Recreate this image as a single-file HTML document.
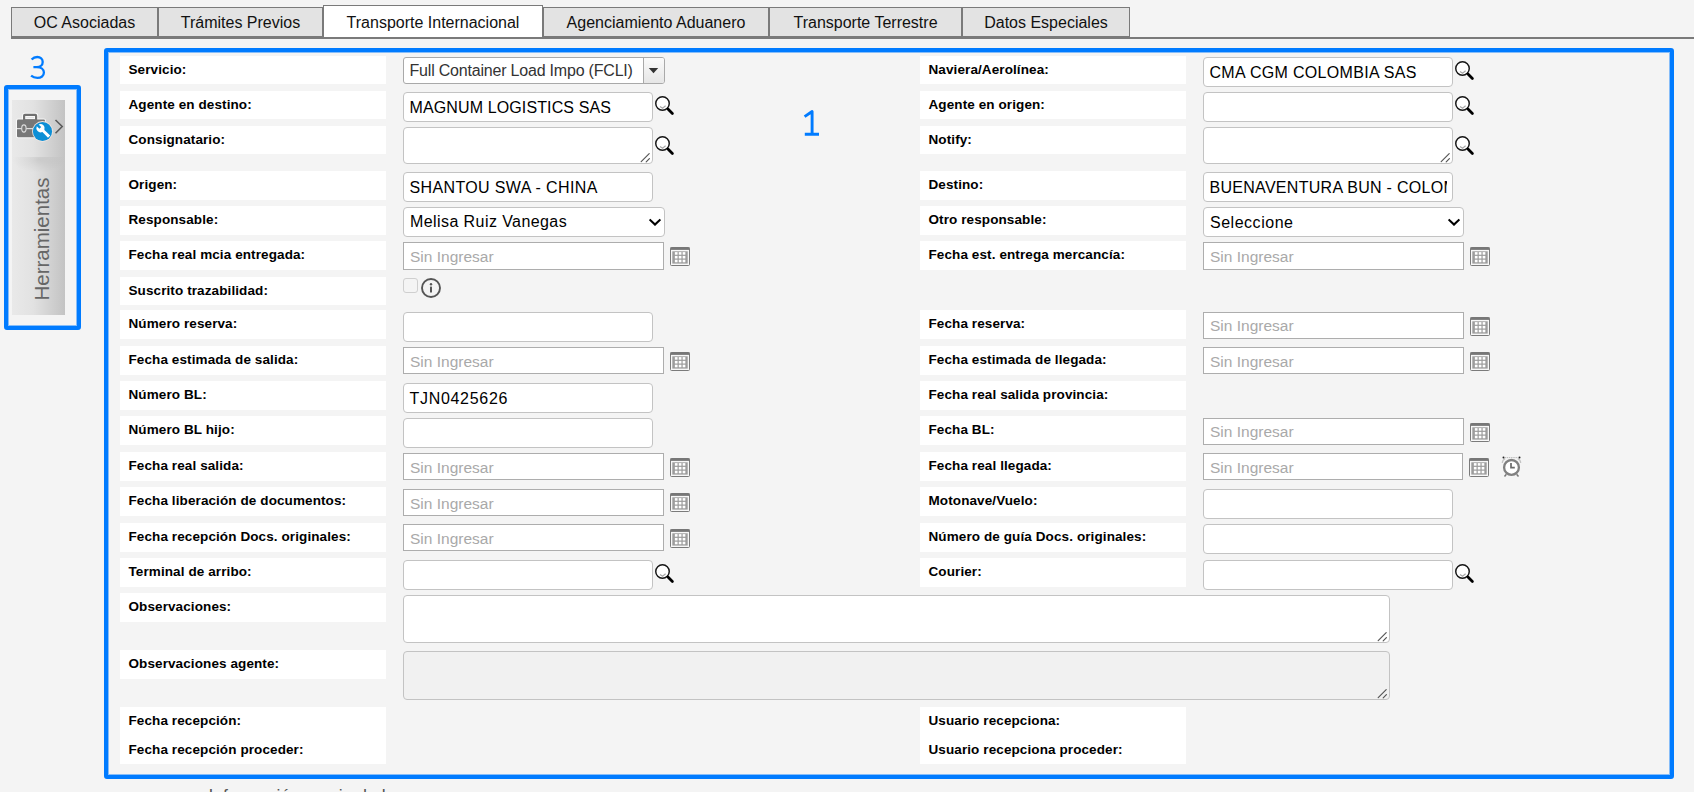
<!DOCTYPE html>
<html><head><meta charset="utf-8"><title>Transporte Internacional</title>
<style>
html,body{margin:0;padding:0}
body{width:1694px;height:792px;overflow:hidden;position:relative;background:#f4f4f4;font-family:'Liberation Sans', sans-serif}
.b{position:absolute}
.t{position:absolute;white-space:nowrap;line-height:20px;font-family:'Liberation Sans', sans-serif}
.tab{position:absolute;box-sizing:content-box;border:1px solid #7a7a7a;background:#e3e3e3;font-size:16px;color:#111;text-align:center;line-height:30px;font-family:'Liberation Sans', sans-serif}
.tab.act{background:#fff;border-bottom:none;line-height:34px}
.inp{box-sizing:border-box;border:1px solid #c3c3c3;border-radius:4px;background:#fff}
.dinp{position:absolute;box-sizing:border-box;border:1px solid #adadad;background:#fff}
</style></head><body>
<div class="b" style="left:11px;top:37px;width:1683px;height:2px;background:#7a7a7a"></div>
<div class="tab" style="left:11px;top:7px;width:145px;height:28px;">OC Asociadas</div>
<div class="tab" style="left:158px;top:7px;width:163px;height:28px;">Trámites Previos</div>
<div class="tab act" style="left:323px;top:5px;width:218px;height:31px;">Transporte Internacional</div>
<div class="tab" style="left:543px;top:7px;width:224px;height:28px;">Agenciamiento Aduanero</div>
<div class="tab" style="left:769px;top:7px;width:191px;height:28px;">Transporte Terrestre</div>
<div class="tab" style="left:962px;top:7px;width:166px;height:28px;">Datos Especiales</div>
<div class="b" style="left:4px;top:85px;width:77px;height:245px;border:4px solid #007bff;border-radius:3px;box-sizing:border-box;box-shadow:inset 0 0 0 1px rgba(0,123,255,0.45)"></div>
<div class="b" style="left:12px;top:100px;width:53px;height:215px;background:linear-gradient(to right,#e9e9e9 0%,#e2e2e2 40%,#c3c3c3 100%)"></div>
<div class="b" style="left:12px;top:150px;width:53px;height:24px;background:radial-gradient(ellipse 50% 55% at 50% 40%,rgba(0,0,0,0.08) 0%,rgba(0,0,0,0.04) 45%,rgba(0,0,0,0) 100%);clip-path:inset(7px 0 0 0)"></div>
<svg class="b" style="left:12px;top:105px" width="56" height="40" viewBox="0 0 56 40">
<rect x="12.1" y="9.9" width="12" height="5.5" rx="0.8" fill="none" stroke="rgba(255,255,255,0.75)" stroke-width="4.2"/><rect x="5" y="14.6" width="28" height="17.7" rx="1.2" fill="none" stroke="rgba(255,255,255,0.75)" stroke-width="2"/><rect x="12.1" y="9.9" width="12" height="5.5" rx="0.8" fill="none" stroke="#707070" stroke-width="2.2"/>
<rect x="5" y="14.6" width="28" height="17.7" rx="1.2" fill="#777"/>
<rect x="5" y="23" width="28" height="1.2" fill="#ddd"/>
<ellipse cx="11.9" cy="23.5" rx="2.2" ry="3.6" fill="#777" stroke="#ddd" stroke-width="1.1"/>
<circle cx="30.5" cy="26.5" r="10.4" fill="#f2e6e0"/>
<circle cx="30.5" cy="26.5" r="9.6" fill="#0d8fd6"/>
<path d="M24.8 21.2 a4.3 4.3 0 0 0 5.6 5.8 l5.6 5.8 l2.2 -2.2 l-5.8 -5.6 a4.3 4.3 0 0 0 -5.8 -5.6 l2.6 2.6 l-1.8 1.8 z" fill="#fff"/>
<path d="M43.5 15 L50.2 21.5 L43.5 28.3" fill="none" stroke="#5a5a5a" stroke-width="1.6"/>
</svg>
<div class="t" style="left:42px;top:239px;font-size:20.5px;color:#666;transform:translate(-50%,-50%) rotate(-90deg);line-height:20px">Herramientas</div>
<svg class="b" style="left:26px;top:52px" width="24" height="30" viewBox="26 52 24 30"><path d="M31.6 59.6 C33.4 57.6 35.4 57 37.2 57 C40.5 57 42.7 59 42.7 61.9 C42.7 65 40.3 67.1 36.8 67.1 L33.4 67.1 M36.8 67.1 C41 67.1 43.9 69.4 43.9 72.6 C43.9 75.9 41.1 77.9 37.4 77.9 C35 77.9 32.8 77.2 31.1 75.7" fill="none" stroke="#007bff" stroke-width="2.3" stroke-linecap="butt"/></svg>
<svg class="b" style="left:800px;top:106px" width="24" height="34" viewBox="800 106 24 34"><path d="M804.6 116.6 L812.1 111.5 V134 M804.8 134.3 H819" fill="none" stroke="#007bff" stroke-width="2.9" stroke-linecap="butt" stroke-linejoin="round"/></svg>
<div class="b" style="left:104px;top:48px;width:1570px;height:731px;border:4px solid #007bff;border-radius:3px;box-sizing:border-box;box-shadow:inset 0 0 0 1px rgba(0,123,255,0.45)"></div>
<div class="b" style="left:120px;top:56px;width:266px;height:28px;background:#fff"></div>
<div class="b" style="left:920px;top:56px;width:266px;height:28px;background:#fff"></div>
<div class="t" style="left:128.5px;top:60.00px;font-size:13.5px;font-weight:700;color:#000;letter-spacing:0.1px;">Servicio:</div>
<div class="t" style="left:928.5px;top:60.00px;font-size:13.5px;font-weight:700;color:#000;letter-spacing:0.1px;">Naviera/Aerolínea:</div>
<div class="b" style="left:120px;top:91px;width:266px;height:28px;background:#fff"></div>
<div class="b" style="left:920px;top:91px;width:266px;height:28px;background:#fff"></div>
<div class="t" style="left:128.5px;top:95.00px;font-size:13.5px;font-weight:700;color:#000;letter-spacing:0.1px;">Agente en destino:</div>
<div class="t" style="left:928.5px;top:95.00px;font-size:13.5px;font-weight:700;color:#000;letter-spacing:0.1px;">Agente en origen:</div>
<div class="b" style="left:120px;top:126px;width:266px;height:28px;background:#fff"></div>
<div class="b" style="left:920px;top:126px;width:266px;height:28px;background:#fff"></div>
<div class="t" style="left:128.5px;top:130.00px;font-size:13.5px;font-weight:700;color:#000;letter-spacing:0.1px;">Consignatario:</div>
<div class="t" style="left:928.5px;top:130.00px;font-size:13.5px;font-weight:700;color:#000;letter-spacing:0.1px;">Notify:</div>
<div class="b" style="left:120px;top:171px;width:266px;height:29px;background:#fff"></div>
<div class="b" style="left:920px;top:171px;width:266px;height:29px;background:#fff"></div>
<div class="t" style="left:128.5px;top:175.00px;font-size:13.5px;font-weight:700;color:#000;letter-spacing:0.1px;">Origen:</div>
<div class="t" style="left:928.5px;top:175.00px;font-size:13.5px;font-weight:700;color:#000;letter-spacing:0.1px;">Destino:</div>
<div class="b" style="left:120px;top:206px;width:266px;height:29px;background:#fff"></div>
<div class="b" style="left:920px;top:206px;width:266px;height:29px;background:#fff"></div>
<div class="t" style="left:128.5px;top:210.00px;font-size:13.5px;font-weight:700;color:#000;letter-spacing:0.1px;">Responsable:</div>
<div class="t" style="left:928.5px;top:210.00px;font-size:13.5px;font-weight:700;color:#000;letter-spacing:0.1px;">Otro responsable:</div>
<div class="b" style="left:120px;top:241px;width:266px;height:29px;background:#fff"></div>
<div class="b" style="left:920px;top:241px;width:266px;height:29px;background:#fff"></div>
<div class="t" style="left:128.5px;top:245.00px;font-size:13.5px;font-weight:700;color:#000;letter-spacing:0.1px;">Fecha real mcia entregada:</div>
<div class="t" style="left:928.5px;top:245.00px;font-size:13.5px;font-weight:700;color:#000;letter-spacing:0.1px;">Fecha est. entrega mercancía:</div>
<div class="b" style="left:120px;top:277px;width:266px;height:28px;background:#fff"></div>
<div class="t" style="left:128.5px;top:281.00px;font-size:13.5px;font-weight:700;color:#000;letter-spacing:0.1px;">Suscrito trazabilidad:</div>
<div class="b" style="left:120px;top:310px;width:266px;height:29px;background:#fff"></div>
<div class="b" style="left:920px;top:310px;width:266px;height:29px;background:#fff"></div>
<div class="t" style="left:128.5px;top:314.00px;font-size:13.5px;font-weight:700;color:#000;letter-spacing:0.1px;">Número reserva:</div>
<div class="t" style="left:928.5px;top:314.00px;font-size:13.5px;font-weight:700;color:#000;letter-spacing:0.1px;">Fecha reserva:</div>
<div class="b" style="left:120px;top:346px;width:266px;height:29px;background:#fff"></div>
<div class="b" style="left:920px;top:346px;width:266px;height:29px;background:#fff"></div>
<div class="t" style="left:128.5px;top:350.00px;font-size:13.5px;font-weight:700;color:#000;letter-spacing:0.1px;">Fecha estimada de salida:</div>
<div class="t" style="left:928.5px;top:350.00px;font-size:13.5px;font-weight:700;color:#000;letter-spacing:0.1px;">Fecha estimada de llegada:</div>
<div class="b" style="left:120px;top:381px;width:266px;height:29px;background:#fff"></div>
<div class="b" style="left:920px;top:381px;width:266px;height:29px;background:#fff"></div>
<div class="t" style="left:128.5px;top:385.00px;font-size:13.5px;font-weight:700;color:#000;letter-spacing:0.1px;">Número BL:</div>
<div class="t" style="left:928.5px;top:385.00px;font-size:13.5px;font-weight:700;color:#000;letter-spacing:0.1px;">Fecha real salida provincia:</div>
<div class="b" style="left:120px;top:416px;width:266px;height:29px;background:#fff"></div>
<div class="b" style="left:920px;top:416px;width:266px;height:29px;background:#fff"></div>
<div class="t" style="left:128.5px;top:420.00px;font-size:13.5px;font-weight:700;color:#000;letter-spacing:0.1px;">Número BL hijo:</div>
<div class="t" style="left:928.5px;top:420.00px;font-size:13.5px;font-weight:700;color:#000;letter-spacing:0.1px;">Fecha BL:</div>
<div class="b" style="left:120px;top:452px;width:266px;height:29px;background:#fff"></div>
<div class="b" style="left:920px;top:452px;width:266px;height:29px;background:#fff"></div>
<div class="t" style="left:128.5px;top:456.00px;font-size:13.5px;font-weight:700;color:#000;letter-spacing:0.1px;">Fecha real salida:</div>
<div class="t" style="left:928.5px;top:456.00px;font-size:13.5px;font-weight:700;color:#000;letter-spacing:0.1px;">Fecha real llegada:</div>
<div class="b" style="left:120px;top:487px;width:266px;height:29px;background:#fff"></div>
<div class="b" style="left:920px;top:487px;width:266px;height:29px;background:#fff"></div>
<div class="t" style="left:128.5px;top:491.00px;font-size:13.5px;font-weight:700;color:#000;letter-spacing:0.1px;">Fecha liberación de documentos:</div>
<div class="t" style="left:928.5px;top:491.00px;font-size:13.5px;font-weight:700;color:#000;letter-spacing:0.1px;">Motonave/Vuelo:</div>
<div class="b" style="left:120px;top:523px;width:266px;height:29px;background:#fff"></div>
<div class="b" style="left:920px;top:523px;width:266px;height:29px;background:#fff"></div>
<div class="t" style="left:128.5px;top:527.00px;font-size:13.5px;font-weight:700;color:#000;letter-spacing:0.1px;">Fecha recepción Docs. originales:</div>
<div class="t" style="left:928.5px;top:527.00px;font-size:13.5px;font-weight:700;color:#000;letter-spacing:0.1px;">Número de guía Docs. originales:</div>
<div class="b" style="left:120px;top:558px;width:266px;height:29px;background:#fff"></div>
<div class="b" style="left:920px;top:558px;width:266px;height:29px;background:#fff"></div>
<div class="t" style="left:128.5px;top:562.00px;font-size:13.5px;font-weight:700;color:#000;letter-spacing:0.1px;">Terminal de arribo:</div>
<div class="t" style="left:928.5px;top:562.00px;font-size:13.5px;font-weight:700;color:#000;letter-spacing:0.1px;">Courier:</div>
<div class="b" style="left:120px;top:593px;width:266px;height:29px;background:#fff"></div>
<div class="t" style="left:128.5px;top:597.00px;font-size:13.5px;font-weight:700;color:#000;letter-spacing:0.1px;">Observaciones:</div>
<div class="b" style="left:120px;top:650px;width:266px;height:29px;background:#fff"></div>
<div class="t" style="left:128.5px;top:654.00px;font-size:13.5px;font-weight:700;color:#000;letter-spacing:0.1px;">Observaciones agente:</div>
<div class="b" style="left:120px;top:707px;width:266px;height:57px;background:#fff"></div>
<div class="b" style="left:920px;top:707px;width:266px;height:57px;background:#fff"></div>
<div class="t" style="left:128.5px;top:711.00px;font-size:13.5px;font-weight:700;color:#000;letter-spacing:0.1px;">Fecha recepción:</div>
<div class="t" style="left:128.5px;top:740.00px;font-size:13.5px;font-weight:700;color:#000;letter-spacing:0.1px;">Fecha recepción proceder:</div>
<div class="t" style="left:928.5px;top:711.00px;font-size:13.5px;font-weight:700;color:#000;letter-spacing:0.1px;">Usuario recepciona:</div>
<div class="t" style="left:928.5px;top:740.00px;font-size:13.5px;font-weight:700;color:#000;letter-spacing:0.1px;">Usuario recepciona proceder:</div>
<div class="b" style="left:403px;top:57px;width:262px;height:27px;border:1px solid #a9a9a9;border-radius:3px;box-sizing:border-box;background:#fff;overflow:hidden"><div style="position:absolute;right:0;top:0;width:20px;height:25px;border-left:1px solid #a9a9a9;background:linear-gradient(#fafafa,#e6e6e6)"></div></div>
<svg class="b" style="left:648px;top:67px" width="12" height="8" viewBox="0 0 12 8"><path d="M0.8 1 L10.2 1 L5.5 6.2 z" fill="#333"/></svg>
<div class="t" style="left:409.5px;top:61.20px;font-size:16px;font-weight:400;color:#333;letter-spacing:-0.2px;">Full Container Load Impo (FCLI)</div>
<div class="b inp" style="left:403px;top:92px;width:250px;height:30px;background:#fff"></div>
<div class="b" style="left:404px;top:93px;width:242.5px;height:28px;overflow:hidden">
<div class="t" style="left:5.5px;top:5.00px;font-size:16px;font-weight:400;color:#000;letter-spacing:0.12px;">MAGNUM LOGISTICS SAS</div>
</div>
<svg class="b" style="left:654px;top:95px" width="22" height="22" viewBox="0 0 22 22"><circle cx="8.5" cy="8.5" r="6.75" fill="#fff" stroke="#151515" stroke-width="1.45"/><path d="M6 11.4 L8.6 13.2 L11.6 10.8" fill="none" stroke="#a8a8a8" stroke-width="1.2"/><path d="M14 14 L18.4 18.4" stroke="#000" stroke-width="2.8" stroke-linecap="round"/></svg>
<div class="b inp" style="left:403px;top:127px;width:250px;height:37px;background:#fff"></div>
<svg class="b" style="left:639px;top:150px" width="14" height="14" viewBox="0 0 14 14"><path d="M2.2 11.6 L10.2 3.6 M7.2 11.8 L10.4 8.6" stroke="#555" stroke-width="1.2" stroke-linecap="round"/></svg>
<svg class="b" style="left:654px;top:135px" width="22" height="22" viewBox="0 0 22 22"><circle cx="8.5" cy="8.5" r="6.75" fill="#fff" stroke="#151515" stroke-width="1.45"/><path d="M6 11.4 L8.6 13.2 L11.6 10.8" fill="none" stroke="#a8a8a8" stroke-width="1.2"/><path d="M14 14 L18.4 18.4" stroke="#000" stroke-width="2.8" stroke-linecap="round"/></svg>
<div class="b inp" style="left:403px;top:172px;width:250px;height:30px;background:#fff"></div>
<div class="b" style="left:404px;top:173px;width:242.5px;height:28px;overflow:hidden">
<div class="t" style="left:5.5px;top:5.00px;font-size:16px;font-weight:400;color:#000;letter-spacing:0.36px;">SHANTOU SWA - CHINA</div>
</div>
<div class="b inp" style="left:403px;top:207px;width:262px;height:30px"></div>
<div class="t" style="left:410px;top:212.30px;font-size:16px;font-weight:400;color:#000;letter-spacing:0.42px;">Melisa Ruiz Vanegas</div>
<svg class="b" style="left:648.5px;top:218.3px" width="12" height="8" viewBox="0 0 12 8"><path d="M0.6 1.4 L6 6.6 L11.4 1.4" fill="none" stroke="#000" stroke-width="2.1"/></svg>
<div class="b dinp" style="left:403px;top:242px;width:261px;height:28px"></div>
<div class="t" style="left:410px;top:246.50px;font-size:15.5px;font-weight:400;color:#a9a9a9;letter-spacing:0px;">Sin Ingresar</div>
<svg class="b" style="left:670px;top:247px" width="21" height="19" viewBox="0 0 21 19"><rect x="0.5" y="0.5" width="19" height="18" rx="1" fill="#f8f8f8" stroke="#7b7b7b" stroke-width="1"/><rect x="0.5" y="0.3" width="19" height="2.6" fill="#777"/><rect x="2.3" y="4.3" width="15.4" height="12.3" fill="#9c9c9c"/><g fill="#fff"><rect x="4.85" y="5.10" width="2.7" height="2.6"/><rect x="8.75" y="5.10" width="2.7" height="2.6"/><rect x="12.65" y="5.10" width="2.7" height="2.6"/><rect x="4.85" y="8.90" width="2.7" height="2.6"/><rect x="8.75" y="8.90" width="2.7" height="2.6"/><rect x="12.65" y="8.90" width="2.7" height="2.6"/><rect x="4.85" y="12.70" width="2.7" height="2.6"/><rect x="8.75" y="12.70" width="2.7" height="2.6"/><rect x="12.65" y="12.70" width="2.7" height="2.6"/></g></svg>
<div class="b" style="left:403px;top:278px;width:15px;height:15px;border:1px solid #cfcfcf;border-radius:3px;box-sizing:border-box"></div>
<svg class="b" style="left:420px;top:277px" width="22" height="22" viewBox="0 0 22 22"><circle cx="11" cy="11" r="9" fill="none" stroke="#555" stroke-width="1.9"/><circle cx="11" cy="7.2" r="1.2" fill="#555"/><rect x="10" y="9.6" width="2" height="6" rx="0.6" fill="#555"/></svg>
<div class="b inp" style="left:403px;top:312px;width:250px;height:30px;background:#fff"></div>
<div class="b dinp" style="left:403px;top:347px;width:261px;height:27px"></div>
<div class="t" style="left:410px;top:351.50px;font-size:15.5px;font-weight:400;color:#a9a9a9;letter-spacing:0px;">Sin Ingresar</div>
<svg class="b" style="left:670px;top:352px" width="21" height="19" viewBox="0 0 21 19"><rect x="0.5" y="0.5" width="19" height="18" rx="1" fill="#f8f8f8" stroke="#7b7b7b" stroke-width="1"/><rect x="0.5" y="0.3" width="19" height="2.6" fill="#777"/><rect x="2.3" y="4.3" width="15.4" height="12.3" fill="#9c9c9c"/><g fill="#fff"><rect x="4.85" y="5.10" width="2.7" height="2.6"/><rect x="8.75" y="5.10" width="2.7" height="2.6"/><rect x="12.65" y="5.10" width="2.7" height="2.6"/><rect x="4.85" y="8.90" width="2.7" height="2.6"/><rect x="8.75" y="8.90" width="2.7" height="2.6"/><rect x="12.65" y="8.90" width="2.7" height="2.6"/><rect x="4.85" y="12.70" width="2.7" height="2.6"/><rect x="8.75" y="12.70" width="2.7" height="2.6"/><rect x="12.65" y="12.70" width="2.7" height="2.6"/></g></svg>
<div class="b inp" style="left:403px;top:383px;width:250px;height:30px;background:#fff"></div>
<div class="b" style="left:404px;top:384px;width:242.5px;height:28px;overflow:hidden">
<div class="t" style="left:5.5px;top:4.60px;font-size:16px;font-weight:400;color:#000;letter-spacing:0.7px;">TJN0425626</div>
</div>
<div class="b inp" style="left:403px;top:418px;width:250px;height:30px;background:#fff"></div>
<div class="b dinp" style="left:403px;top:453px;width:261px;height:27px"></div>
<div class="t" style="left:410px;top:457.50px;font-size:15.5px;font-weight:400;color:#a9a9a9;letter-spacing:0px;">Sin Ingresar</div>
<svg class="b" style="left:670px;top:458px" width="21" height="19" viewBox="0 0 21 19"><rect x="0.5" y="0.5" width="19" height="18" rx="1" fill="#f8f8f8" stroke="#7b7b7b" stroke-width="1"/><rect x="0.5" y="0.3" width="19" height="2.6" fill="#777"/><rect x="2.3" y="4.3" width="15.4" height="12.3" fill="#9c9c9c"/><g fill="#fff"><rect x="4.85" y="5.10" width="2.7" height="2.6"/><rect x="8.75" y="5.10" width="2.7" height="2.6"/><rect x="12.65" y="5.10" width="2.7" height="2.6"/><rect x="4.85" y="8.90" width="2.7" height="2.6"/><rect x="8.75" y="8.90" width="2.7" height="2.6"/><rect x="12.65" y="8.90" width="2.7" height="2.6"/><rect x="4.85" y="12.70" width="2.7" height="2.6"/><rect x="8.75" y="12.70" width="2.7" height="2.6"/><rect x="12.65" y="12.70" width="2.7" height="2.6"/></g></svg>
<div class="b dinp" style="left:403px;top:489px;width:261px;height:27px"></div>
<div class="t" style="left:410px;top:493.50px;font-size:15.5px;font-weight:400;color:#a9a9a9;letter-spacing:0px;">Sin Ingresar</div>
<svg class="b" style="left:670px;top:493px" width="21" height="19" viewBox="0 0 21 19"><rect x="0.5" y="0.5" width="19" height="18" rx="1" fill="#f8f8f8" stroke="#7b7b7b" stroke-width="1"/><rect x="0.5" y="0.3" width="19" height="2.6" fill="#777"/><rect x="2.3" y="4.3" width="15.4" height="12.3" fill="#9c9c9c"/><g fill="#fff"><rect x="4.85" y="5.10" width="2.7" height="2.6"/><rect x="8.75" y="5.10" width="2.7" height="2.6"/><rect x="12.65" y="5.10" width="2.7" height="2.6"/><rect x="4.85" y="8.90" width="2.7" height="2.6"/><rect x="8.75" y="8.90" width="2.7" height="2.6"/><rect x="12.65" y="8.90" width="2.7" height="2.6"/><rect x="4.85" y="12.70" width="2.7" height="2.6"/><rect x="8.75" y="12.70" width="2.7" height="2.6"/><rect x="12.65" y="12.70" width="2.7" height="2.6"/></g></svg>
<div class="b dinp" style="left:403px;top:524px;width:261px;height:27px"></div>
<div class="t" style="left:410px;top:528.50px;font-size:15.5px;font-weight:400;color:#a9a9a9;letter-spacing:0px;">Sin Ingresar</div>
<svg class="b" style="left:670px;top:529px" width="21" height="19" viewBox="0 0 21 19"><rect x="0.5" y="0.5" width="19" height="18" rx="1" fill="#f8f8f8" stroke="#7b7b7b" stroke-width="1"/><rect x="0.5" y="0.3" width="19" height="2.6" fill="#777"/><rect x="2.3" y="4.3" width="15.4" height="12.3" fill="#9c9c9c"/><g fill="#fff"><rect x="4.85" y="5.10" width="2.7" height="2.6"/><rect x="8.75" y="5.10" width="2.7" height="2.6"/><rect x="12.65" y="5.10" width="2.7" height="2.6"/><rect x="4.85" y="8.90" width="2.7" height="2.6"/><rect x="8.75" y="8.90" width="2.7" height="2.6"/><rect x="12.65" y="8.90" width="2.7" height="2.6"/><rect x="4.85" y="12.70" width="2.7" height="2.6"/><rect x="8.75" y="12.70" width="2.7" height="2.6"/><rect x="12.65" y="12.70" width="2.7" height="2.6"/></g></svg>
<div class="b inp" style="left:403px;top:560px;width:250px;height:30px;background:#fff"></div>
<svg class="b" style="left:654px;top:563px" width="22" height="22" viewBox="0 0 22 22"><circle cx="8.5" cy="8.5" r="6.75" fill="#fff" stroke="#151515" stroke-width="1.45"/><path d="M6 11.4 L8.6 13.2 L11.6 10.8" fill="none" stroke="#a8a8a8" stroke-width="1.2"/><path d="M14 14 L18.4 18.4" stroke="#000" stroke-width="2.8" stroke-linecap="round"/></svg>
<div class="b inp" style="left:403px;top:595px;width:987px;height:48px;background:#fff"></div>
<svg class="b" style="left:1376px;top:629px" width="14" height="14" viewBox="0 0 14 14"><path d="M2.2 11.6 L10.2 3.6 M7.2 11.8 L10.4 8.6" stroke="#555" stroke-width="1.2" stroke-linecap="round"/></svg>
<div class="b inp" style="left:403px;top:651px;width:987px;height:49px;background:#f1f1f1"></div>
<svg class="b" style="left:1376px;top:686px" width="14" height="14" viewBox="0 0 14 14"><path d="M2.2 11.6 L10.2 3.6 M7.2 11.8 L10.4 8.6" stroke="#555" stroke-width="1.2" stroke-linecap="round"/></svg>
<div class="b inp" style="left:1203px;top:57px;width:250px;height:30px;background:#fff"></div>
<div class="b" style="left:1204px;top:58px;width:242.5px;height:28px;overflow:hidden">
<div class="t" style="left:5.5px;top:4.70px;font-size:16px;font-weight:400;color:#000;letter-spacing:0.32px;">CMA CGM COLOMBIA SAS</div>
</div>
<svg class="b" style="left:1454px;top:60px" width="22" height="22" viewBox="0 0 22 22"><circle cx="8.5" cy="8.5" r="6.75" fill="#fff" stroke="#151515" stroke-width="1.45"/><path d="M6 11.4 L8.6 13.2 L11.6 10.8" fill="none" stroke="#a8a8a8" stroke-width="1.2"/><path d="M14 14 L18.4 18.4" stroke="#000" stroke-width="2.8" stroke-linecap="round"/></svg>
<div class="b inp" style="left:1203px;top:92px;width:250px;height:30px;background:#fff"></div>
<svg class="b" style="left:1454px;top:95px" width="22" height="22" viewBox="0 0 22 22"><circle cx="8.5" cy="8.5" r="6.75" fill="#fff" stroke="#151515" stroke-width="1.45"/><path d="M6 11.4 L8.6 13.2 L11.6 10.8" fill="none" stroke="#a8a8a8" stroke-width="1.2"/><path d="M14 14 L18.4 18.4" stroke="#000" stroke-width="2.8" stroke-linecap="round"/></svg>
<div class="b inp" style="left:1203px;top:127px;width:250px;height:37px;background:#fff"></div>
<svg class="b" style="left:1439px;top:150px" width="14" height="14" viewBox="0 0 14 14"><path d="M2.2 11.6 L10.2 3.6 M7.2 11.8 L10.4 8.6" stroke="#555" stroke-width="1.2" stroke-linecap="round"/></svg>
<svg class="b" style="left:1454px;top:135px" width="22" height="22" viewBox="0 0 22 22"><circle cx="8.5" cy="8.5" r="6.75" fill="#fff" stroke="#151515" stroke-width="1.45"/><path d="M6 11.4 L8.6 13.2 L11.6 10.8" fill="none" stroke="#a8a8a8" stroke-width="1.2"/><path d="M14 14 L18.4 18.4" stroke="#000" stroke-width="2.8" stroke-linecap="round"/></svg>
<div class="b inp" style="left:1203px;top:172px;width:250px;height:30px;background:#fff"></div>
<div class="b" style="left:1204px;top:173px;width:242.5px;height:28px;overflow:hidden">
<div class="t" style="left:5.5px;top:5.00px;font-size:16px;font-weight:400;color:#000;letter-spacing:0.29px;">BUENAVENTURA BUN - COLOMBIA</div>
</div>
<div class="b inp" style="left:1203px;top:207px;width:261px;height:30px"></div>
<div class="t" style="left:1210px;top:212.80px;font-size:16px;font-weight:400;color:#000;letter-spacing:0.52px;">Seleccione</div>
<svg class="b" style="left:1447.5px;top:218.3px" width="12" height="8" viewBox="0 0 12 8"><path d="M0.6 1.4 L6 6.6 L11.4 1.4" fill="none" stroke="#000" stroke-width="2.1"/></svg>
<div class="b dinp" style="left:1203px;top:242px;width:261px;height:28px"></div>
<div class="t" style="left:1210px;top:246.50px;font-size:15.5px;font-weight:400;color:#a9a9a9;letter-spacing:0px;">Sin Ingresar</div>
<svg class="b" style="left:1470px;top:247px" width="21" height="19" viewBox="0 0 21 19"><rect x="0.5" y="0.5" width="19" height="18" rx="1" fill="#f8f8f8" stroke="#7b7b7b" stroke-width="1"/><rect x="0.5" y="0.3" width="19" height="2.6" fill="#777"/><rect x="2.3" y="4.3" width="15.4" height="12.3" fill="#9c9c9c"/><g fill="#fff"><rect x="4.85" y="5.10" width="2.7" height="2.6"/><rect x="8.75" y="5.10" width="2.7" height="2.6"/><rect x="12.65" y="5.10" width="2.7" height="2.6"/><rect x="4.85" y="8.90" width="2.7" height="2.6"/><rect x="8.75" y="8.90" width="2.7" height="2.6"/><rect x="12.65" y="8.90" width="2.7" height="2.6"/><rect x="4.85" y="12.70" width="2.7" height="2.6"/><rect x="8.75" y="12.70" width="2.7" height="2.6"/><rect x="12.65" y="12.70" width="2.7" height="2.6"/></g></svg>
<div class="b dinp" style="left:1203px;top:312px;width:261px;height:27px"></div>
<div class="t" style="left:1210px;top:316.00px;font-size:15.5px;font-weight:400;color:#a9a9a9;letter-spacing:0px;">Sin Ingresar</div>
<svg class="b" style="left:1470px;top:317px" width="21" height="19" viewBox="0 0 21 19"><rect x="0.5" y="0.5" width="19" height="18" rx="1" fill="#f8f8f8" stroke="#7b7b7b" stroke-width="1"/><rect x="0.5" y="0.3" width="19" height="2.6" fill="#777"/><rect x="2.3" y="4.3" width="15.4" height="12.3" fill="#9c9c9c"/><g fill="#fff"><rect x="4.85" y="5.10" width="2.7" height="2.6"/><rect x="8.75" y="5.10" width="2.7" height="2.6"/><rect x="12.65" y="5.10" width="2.7" height="2.6"/><rect x="4.85" y="8.90" width="2.7" height="2.6"/><rect x="8.75" y="8.90" width="2.7" height="2.6"/><rect x="12.65" y="8.90" width="2.7" height="2.6"/><rect x="4.85" y="12.70" width="2.7" height="2.6"/><rect x="8.75" y="12.70" width="2.7" height="2.6"/><rect x="12.65" y="12.70" width="2.7" height="2.6"/></g></svg>
<div class="b dinp" style="left:1203px;top:347px;width:261px;height:27px"></div>
<div class="t" style="left:1210px;top:351.50px;font-size:15.5px;font-weight:400;color:#a9a9a9;letter-spacing:0px;">Sin Ingresar</div>
<svg class="b" style="left:1470px;top:352px" width="21" height="19" viewBox="0 0 21 19"><rect x="0.5" y="0.5" width="19" height="18" rx="1" fill="#f8f8f8" stroke="#7b7b7b" stroke-width="1"/><rect x="0.5" y="0.3" width="19" height="2.6" fill="#777"/><rect x="2.3" y="4.3" width="15.4" height="12.3" fill="#9c9c9c"/><g fill="#fff"><rect x="4.85" y="5.10" width="2.7" height="2.6"/><rect x="8.75" y="5.10" width="2.7" height="2.6"/><rect x="12.65" y="5.10" width="2.7" height="2.6"/><rect x="4.85" y="8.90" width="2.7" height="2.6"/><rect x="8.75" y="8.90" width="2.7" height="2.6"/><rect x="12.65" y="8.90" width="2.7" height="2.6"/><rect x="4.85" y="12.70" width="2.7" height="2.6"/><rect x="8.75" y="12.70" width="2.7" height="2.6"/><rect x="12.65" y="12.70" width="2.7" height="2.6"/></g></svg>
<div class="b dinp" style="left:1203px;top:418px;width:261px;height:27px"></div>
<div class="t" style="left:1210px;top:422.00px;font-size:15.5px;font-weight:400;color:#a9a9a9;letter-spacing:0px;">Sin Ingresar</div>
<svg class="b" style="left:1470px;top:423px" width="21" height="19" viewBox="0 0 21 19"><rect x="0.5" y="0.5" width="19" height="18" rx="1" fill="#f8f8f8" stroke="#7b7b7b" stroke-width="1"/><rect x="0.5" y="0.3" width="19" height="2.6" fill="#777"/><rect x="2.3" y="4.3" width="15.4" height="12.3" fill="#9c9c9c"/><g fill="#fff"><rect x="4.85" y="5.10" width="2.7" height="2.6"/><rect x="8.75" y="5.10" width="2.7" height="2.6"/><rect x="12.65" y="5.10" width="2.7" height="2.6"/><rect x="4.85" y="8.90" width="2.7" height="2.6"/><rect x="8.75" y="8.90" width="2.7" height="2.6"/><rect x="12.65" y="8.90" width="2.7" height="2.6"/><rect x="4.85" y="12.70" width="2.7" height="2.6"/><rect x="8.75" y="12.70" width="2.7" height="2.6"/><rect x="12.65" y="12.70" width="2.7" height="2.6"/></g></svg>
<div class="b dinp" style="left:1203px;top:453px;width:260px;height:27px"></div>
<div class="t" style="left:1210px;top:457.50px;font-size:15.5px;font-weight:400;color:#a9a9a9;letter-spacing:0px;">Sin Ingresar</div>
<svg class="b" style="left:1469px;top:458px" width="21" height="19" viewBox="0 0 21 19"><rect x="0.5" y="0.5" width="19" height="18" rx="1" fill="#f8f8f8" stroke="#7b7b7b" stroke-width="1"/><rect x="0.5" y="0.3" width="19" height="2.6" fill="#777"/><rect x="2.3" y="4.3" width="15.4" height="12.3" fill="#9c9c9c"/><g fill="#fff"><rect x="4.85" y="5.10" width="2.7" height="2.6"/><rect x="8.75" y="5.10" width="2.7" height="2.6"/><rect x="12.65" y="5.10" width="2.7" height="2.6"/><rect x="4.85" y="8.90" width="2.7" height="2.6"/><rect x="8.75" y="8.90" width="2.7" height="2.6"/><rect x="12.65" y="8.90" width="2.7" height="2.6"/><rect x="4.85" y="12.70" width="2.7" height="2.6"/><rect x="8.75" y="12.70" width="2.7" height="2.6"/><rect x="12.65" y="12.70" width="2.7" height="2.6"/></g></svg>
<svg class="b" style="left:1500px;top:454px" width="24" height="25" viewBox="0 0 24 25"><path d="M2.3 9 A5 5 0 0 1 5.2 4.6 M20.7 9 A5 5 0 0 0 17.8 4.6" fill="none" stroke="#c4c4c4" stroke-width="1.2"/><circle cx="11.5" cy="13.4" r="7.4" fill="#fff" stroke="#808080" stroke-width="2.3"/><path d="M11 9 V13.6 H14.8" fill="none" stroke="#6a6a6a" stroke-width="1.7"/><circle cx="3.5" cy="3.5" r="1" fill="#222"/><circle cx="19.5" cy="3.5" r="1" fill="#222"/><path d="M4.5 3.6 H18.6" stroke="#aaa" stroke-width="0.8" stroke-dasharray="1.4 0.8"/><path d="M6.4 20.2 L4.5 22.4 M16.6 20.2 L18.5 22.4" stroke="#777" stroke-width="1.5"/></svg>
<div class="b inp" style="left:1203px;top:489px;width:250px;height:30px;background:#fff"></div>
<div class="b inp" style="left:1203px;top:524px;width:250px;height:30px;background:#fff"></div>
<div class="b inp" style="left:1203px;top:560px;width:250px;height:30px;background:#fff"></div>
<svg class="b" style="left:1454px;top:563px" width="22" height="22" viewBox="0 0 22 22"><circle cx="8.5" cy="8.5" r="6.75" fill="#fff" stroke="#151515" stroke-width="1.45"/><path d="M6 11.4 L8.6 13.2 L11.6 10.8" fill="none" stroke="#a8a8a8" stroke-width="1.2"/><path d="M14 14 L18.4 18.4" stroke="#000" stroke-width="2.8" stroke-linecap="round"/></svg>
<div class="t" style="left:208.5px;top:786.00px;font-size:17.5px;font-weight:400;color:#555;letter-spacing:0px;">Información previa de la carga</div>
</body></html>
